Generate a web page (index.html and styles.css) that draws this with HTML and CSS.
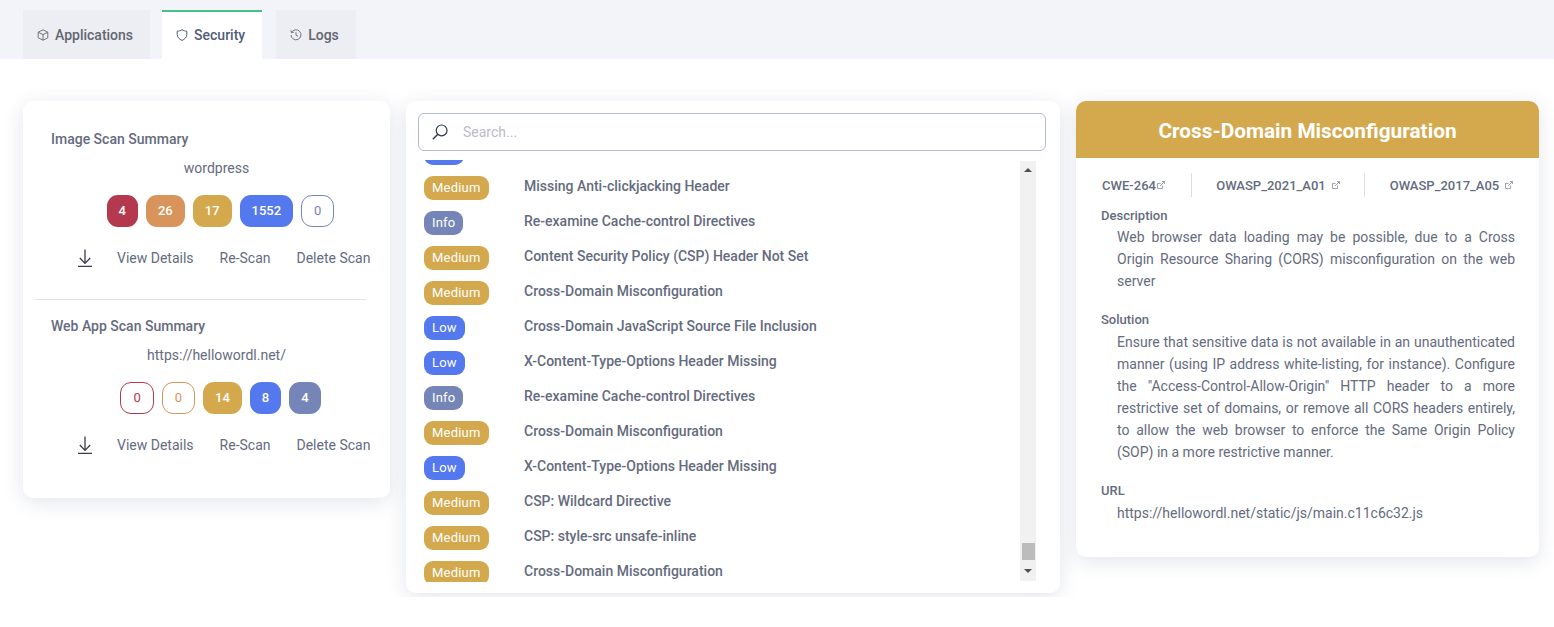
FILE: index.html
```html
<!DOCTYPE html>
<html lang="en">
<head>
    <meta charset="UTF-8">
    <meta name="viewport" content="width=device-width, initial-scale=1.0">
    <title>Security</title>
    <link rel="stylesheet" href="styles.css">
</head>
<body>
    <svg class="sprite" aria-hidden="true">
        <symbol id="download" viewBox="0 0 14 18">
            <path d="M7 0.5V14M1.8 9L7 14.4L12.2 9M0 17.4H14" fill="none" stroke="currentColor" stroke-width="1.3"/>
        </symbol>
        <symbol id="external" viewBox="0 0 8 8">
            <path d="M5.6 4.4V7.5H0.5V2.4H3.6M3 5L7.4 0.6M5 0.5H7.5V3" fill="none" stroke="currentColor" stroke-width="0.8"/>
        </symbol>
    </svg>

    <nav class="tabs">
        <a class="tab">
            <svg class="tab-icon" viewBox="0 0 12 12"><path d="M6 0.8L10.8 3.2V8.8L6 11.2L1.2 8.8V3.2ZM1.2 3.2L6 5.6L10.8 3.2M6 5.6V11.2" fill="none" stroke="currentColor" stroke-width="0.9" stroke-linejoin="round"/></svg>
            Applications
        </a>
        <a class="tab active">
            <svg class="tab-icon" viewBox="0 0 12 12"><path d="M6 0.7C7.4 1.7 9 2.1 10.8 2.2V5.6C10.8 8.3 8.6 10.3 6 11.4C3.4 10.3 1.2 8.3 1.2 5.6V2.2C3 2.1 4.6 1.7 6 0.7Z" fill="none" stroke="currentColor" stroke-width="1"/></svg>
            Security
        </a>
        <a class="tab">
            <svg class="tab-icon" viewBox="0 0 12 12"><path d="M1.6 3.4A5 5 0 1 1 1 6M0.9 1.3L1.4 3.6L3.8 3.3M6 3.2V6.2L8.1 7.4" fill="none" stroke="currentColor" stroke-width="0.9"/></svg>
            Logs
        </a>
    </nav>

    <main class="content">
        <section class="card summary">
            <div class="scan">
                <h4 class="scan-title">Image Scan Summary</h4>
                <p class="scan-target">wordpress</p>
                <div class="counts">
                    <span class="count critical">4</span>
                    <span class="count high">26</span>
                    <span class="count medium">17</span>
                    <span class="count low">1552</span>
                    <span class="count info empty">0</span>
                </div>
                <div class="actions">
                    <svg class="download"><use href="#download"/></svg>
                    <a>View Details</a>
                    <a>Re-Scan</a>
                    <a>Delete Scan</a>
                </div>
            </div>
            <hr class="divider">
            <div class="scan">
                <h4 class="scan-title">Web App Scan Summary</h4>
                <p class="scan-target">https://hellowordl.net/</p>
                <div class="counts">
                    <span class="count critical empty">0</span>
                    <span class="count high empty">0</span>
                    <span class="count medium">14</span>
                    <span class="count low">8</span>
                    <span class="count info">4</span>
                </div>
                <div class="actions">
                    <svg class="download"><use href="#download"/></svg>
                    <a>View Details</a>
                    <a>Re-Scan</a>
                    <a>Delete Scan</a>
                </div>
            </div>
        </section>

        <section class="card alerts">
            <div class="search">
                <svg class="search-icon" viewBox="0 0 16 16"><circle cx="9.6" cy="6.4" r="5.4" fill="none" stroke="currentColor" stroke-width="1.2"/><path d="M5.8 10.2L0.8 15.2" fill="none" stroke="currentColor" stroke-width="1.4"/></svg>
                <input class="search-input" type="text" placeholder="Search...">
            </div>
            <div class="alert-scroll">
                <ul class="alert-list">
                    <li class="alert"><span class="level-cell"><span class="level low"></span></span></li>
                    <li class="alert"><span class="level-cell"><span class="level medium">Medium</span></span><span class="alert-name">Missing Anti-clickjacking Header</span></li>
                    <li class="alert"><span class="level-cell"><span class="level info">Info</span></span><span class="alert-name">Re-examine Cache-control Directives</span></li>
                    <li class="alert"><span class="level-cell"><span class="level medium">Medium</span></span><span class="alert-name">Content Security Policy (CSP) Header Not Set</span></li>
                    <li class="alert"><span class="level-cell"><span class="level medium">Medium</span></span><span class="alert-name">Cross-Domain Misconfiguration</span></li>
                    <li class="alert"><span class="level-cell"><span class="level low">Low</span></span><span class="alert-name">Cross-Domain JavaScript Source File Inclusion</span></li>
                    <li class="alert"><span class="level-cell"><span class="level low">Low</span></span><span class="alert-name">X-Content-Type-Options Header Missing</span></li>
                    <li class="alert"><span class="level-cell"><span class="level info">Info</span></span><span class="alert-name">Re-examine Cache-control Directives</span></li>
                    <li class="alert"><span class="level-cell"><span class="level medium">Medium</span></span><span class="alert-name">Cross-Domain Misconfiguration</span></li>
                    <li class="alert"><span class="level-cell"><span class="level low">Low</span></span><span class="alert-name">X-Content-Type-Options Header Missing</span></li>
                    <li class="alert"><span class="level-cell"><span class="level medium">Medium</span></span><span class="alert-name">CSP: Wildcard Directive</span></li>
                    <li class="alert"><span class="level-cell"><span class="level medium">Medium</span></span><span class="alert-name">CSP: style-src unsafe-inline</span></li>
                    <li class="alert"><span class="level-cell"><span class="level medium">Medium</span></span><span class="alert-name">Cross-Domain Misconfiguration</span></li>
                </ul>
                <div class="scrollbar">
                    <span class="arrow-up"></span>
                    <span class="thumb"></span>
                    <span class="arrow-down"></span>
                </div>
            </div>
        </section>

        <section class="card detail">
            <h2 class="detail-title">Cross-Domain Misconfiguration</h2>
            <div class="refs">
                <a class="ref ref-cwe">CWE-264<svg class="ext"><use href="#external"/></svg></a>
                <a class="ref ref-2021">OWASP_2021_A01<svg class="ext"><use href="#external"/></svg></a>
                <a class="ref ref-2017">OWASP_2017_A05<svg class="ext"><use href="#external"/></svg></a>
            </div>
            <div class="detail-body">
                <h5 class="label">Description</h5>
                <p class="text text-first">Web browser data loading may be possible, due to a Cross Origin Resource Sharing (CORS) misconfiguration on the web server</p>
                <h5 class="label">Solution</h5>
                <p class="text">Ensure that sensitive data is not available in an unauthenticated manner (using IP address white-listing, for instance). Configure the "Access-Control-Allow-Origin" HTTP header to a more restrictive set of domains, or remove all CORS headers entirely, to allow the web browser to enforce the Same Origin Policy (SOP) in a more restrictive manner.</p>
                <h5 class="label">URL</h5>
                <p class="text">https://hellowordl.net/static/js/main.c11c6c32.js</p>
            </div>
        </section>
    </main>
</body>
</html>
```

FILE: styles.css
```css
* {
    box-sizing: border-box;
}
body {
    margin: 0;
    background: #fff;
    font-family: Roboto, "Liberation Sans", sans-serif;
    font-size: 14px;
    color: #656b7e;
}
.sprite {
    display: none;
}

/* tabs */
.tabs {
    display: flex;
    gap: 12px;
    height: 59px;
    padding: 10px 0 0 23px;
    background: #f3f4f9;
}
.tab {
    display: flex;
    align-items: center;
    gap: 6px;
    padding: 0 17px 0 14px;
    background: #edeef3;
    color: #62666f;
    font-weight: 500;
    font-size: 14px;
}
.tab.active {
    background: #fff;
    border-top: 2px solid #48c08a;
    padding-bottom: 2px;
    margin-right: 2px;
    color: #525c7a;
}
.tab-icon {
    width: 12px;
    height: 12px;
}

/* layout */
.content {
    display: flex;
    align-items: flex-start;
    gap: 16px;
    height: 538px;
    padding: 42px 15px 0 23px;
    overflow: hidden;
}
.card {
    background: #fff;
    border-radius: 10px;
    box-shadow: 0 4px 20px rgba(60, 70, 110, 0.14);
}

/* summary */
.summary {
    width: 367px;
    height: 397px;
    padding: 28px 12px 0;
}
.scan-title {
    margin: 0 0 0 16px;
    font-size: 14px;
    line-height: 20px;
    font-weight: 500;
}
.scan-target {
    margin: 9px 0 0;
    padding-left: 20px;
    line-height: 20px;
    text-align: center;
}
.counts {
    display: flex;
    justify-content: center;
    gap: 8px;
    margin-top: 17px;
    padding-left: 28px;
}
.count {
    height: 32px;
    padding: 0 11px;
    border: 1px solid transparent;
    border-radius: 11px;
    color: #fff;
    font-size: 13px;
    font-weight: 500;
    line-height: 30px;
}
.count.critical { background: #b4384e; }
.count.high { background: #d9945c; }
.count.medium { background: #d4a94e; }
.count.low { background: #5478ee; }
.count.info { background: #7585b7; }
.count.empty {
    padding: 0 12px;
    background: #fff;
    font-weight: 400;
}
.count.critical.empty { border-color: #b4384e; color: #b4384e; }
.count.high.empty { border-color: #d9945c; color: #d9945c; }
.count.info.empty { border-color: #7585b7; color: #7585b7; }
.actions {
    display: flex;
    align-items: center;
    gap: 26px;
    margin-top: 21px;
    padding-left: 43px;
    line-height: 20px;
}
.download {
    width: 14px;
    height: 18px;
    margin-right: -1px;
    color: #3e3850;
}
.divider {
    margin: 31px 12px 16px 0;
    border: 0;
    border-top: 1px solid #e2e3e7;
}

/* alert list */
.alerts {
    width: 654px;
    height: 492px;
    padding: 12px 14px 0 12px;
}
.search {
    display: flex;
    align-items: center;
    gap: 15px;
    height: 38px;
    padding: 0 13px;
    border: 1px solid #b4bad0;
    border-radius: 6px;
}
.search-icon {
    flex: none;
    width: 16px;
    height: 16px;
    color: #2f3650;
}
.search-input {
    flex: 1;
    border: 0;
    outline: 0;
    padding: 0;
    font-family: inherit;
    font-size: 14px;
}
.search-input::placeholder {
    color: #bcbcc2;
}
.alert-scroll {
    display: flex;
    height: 422px;
    margin-top: 9px;
    padding: 0 10px 0 6px;
    overflow: hidden;
}
.alert-list {
    flex: 1;
    margin: -19px 0 0;
    padding: 0;
    list-style: none;
}
.alert {
    display: flex;
    align-items: flex-start;
    height: 35px;
}
.level-cell {
    flex: none;
    width: 100px;
}
.level {
    display: inline-block;
    height: 24px;
    padding: 0 8px;
    border-radius: 9px;
    color: #fff;
    font-size: 13px;
    font-weight: 400;
    letter-spacing: 0.2px;
    line-height: 24px;
    vertical-align: top;
}
.level.medium { background: #d4a94e; }
.level.low { background: #5478ee; min-width: 40px; }
.level.info { background: #7585b7; }
.alert-name {
    font-weight: 500;
    line-height: 20px;
}
.scrollbar {
    display: flex;
    flex-direction: column;
    align-items: center;
    flex: none;
    width: 16px;
    height: 420px;
    margin-top: 1px;
    background: #f1f1f1;
}
.arrow-up {
    margin-top: 7px;
    border: 4px solid transparent;
    border-top: 0;
    border-bottom: 4px solid #505050;
}
.thumb {
    width: 13px;
    height: 17px;
    margin-top: 371px;
    background: #bcbcbc;
}
.arrow-down {
    margin-top: 9px;
    border: 4px solid transparent;
    border-bottom: 0;
    border-top: 4px solid #505050;
}

/* detail */
.detail {
    width: 463px;
    height: 456px;
}
.detail-title {
    margin: 0;
    height: 57px;
    background: #d4a94e;
    border-radius: 10px 10px 0 0;
    color: #fff;
    font-size: 20.8px;
    font-weight: 700;
    line-height: 60px;
    text-align: center;
}
.refs {
    display: flex;
    height: 24px;
    margin-top: 15px;
}
.ref {
    display: flex;
    align-items: center;
    justify-content: center;
    gap: 6px;
    font-size: 13px;
    font-weight: 500;
}
.ref-cwe {
    width: 116px;
    gap: 1px;
    border-right: 1px solid #dcdde1;
}
.ref-2021 {
    width: 173px;
    border-right: 1px solid #dcdde1;
}
.ref-2017 {
    width: 173px;
}
.ext {
    width: 8px;
    height: 8px;
    color: #868b9b;
}
.detail-body {
    padding: 9px 24px 0 25px;
}
.label {
    margin: 0;
    font-size: 13px;
    font-weight: 500;
    line-height: 20px;
}
.text {
    margin: 1px 0 18px;
    padding-left: 16px;
    line-height: 22px;
    text-align: justify;
}
.text-first {
    margin-top: 0;
}
```
